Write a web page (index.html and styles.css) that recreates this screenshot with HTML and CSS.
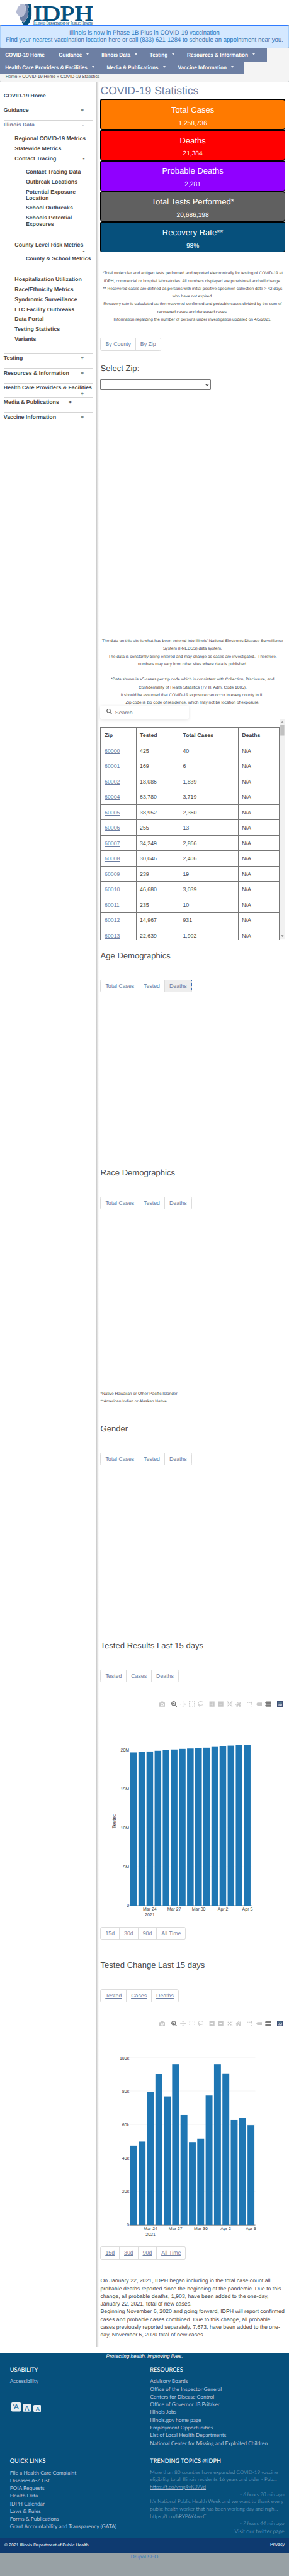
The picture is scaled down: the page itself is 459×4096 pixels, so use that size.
FILE: index.html
```html
<!DOCTYPE html>
<html lang="en">
<head>
<meta charset="utf-8">
<title>COVID-19 Statistics | IDPH</title>
<link rel="stylesheet" href="styles.css">
</head>
<body>
<svg class="sprite" width="0" height="0">
  <symbol id="i-camera" viewBox="0 0 16 16"><path fill-rule="evenodd" d="M1 4h3l1.500-3h5L12 4h3q1 0 1 1v9q0 1-1 1H1q-1 0-1-1V5q0-1 1-1zM8 5a4 4 0 1 0 .01 0zm0 1.700a2.300 2.300 0 1 1-.01 0z"/></symbol>
  <symbol id="i-zoom" viewBox="0 0 16 16"><path fill-rule="evenodd" d="M6.500 0a6.500 6.500 0 1 0 .01 0zM3 3.200h7v6.600H3zM4.300 4.500v4h4.400v-4z"/><path d="M5 5.200h3v2.600H5zM10 11.500l2-1.500 4 4.500-1.500 1.500z"/></symbol>
  <symbol id="i-pan" viewBox="0 0 16 16"><path d="M8 0l2.500 3H8.700v4.300H13V5.500L16 8l-3 2.500V8.700H8.700V13h1.800L8 16l-2.500-3h1.800V8.700H3v1.800L0 8l3-2.500v1.800h4.300V3H5.500z"/></symbol>
  <symbol id="i-select" viewBox="0 0 16 16"><path d="M0 0h2v2H0zM4.700 0h2v2h-2zM9.300 0h2v2h-2zM14 0h2v2h-2zM0 4.700h2v2H0zM14 4.700h2v2h-2zM0 9.300h2v2H0zM14 9.300h2v2h-2zM0 14h2v2H0zM4.700 14h2v2h-2zM9.300 14h2v2h-2zM14 14h2v2h-2z"/></symbol>
  <symbol id="i-lasso" viewBox="0 0 16 16"><g fill="none" stroke="currentColor" stroke-width="1.500"><ellipse cx="8.500" cy="6" rx="6.700" ry="5.200"/><circle cx="4" cy="10" r="2"/><path d="M4 12q2 2 .500 4"/></g></symbol>
  <symbol id="i-plus" viewBox="0 0 16 16"><path fill-rule="evenodd" d="M1 1h14v14H1zM7 4v3H4v2h3v3h2V9h3V7H9V4z"/></symbol>
  <symbol id="i-minus" viewBox="0 0 16 16"><path fill-rule="evenodd" d="M1 1h14v14H1zM4 7v2h8V7z"/></symbol>
  <symbol id="i-auto" viewBox="0 0 16 16"><path d="M0 0h4v1H1v3H0zM12 0h4v4h-1V1h-3zM0 12h1v3h3v1H0zM15 12h1v4h-4v-1h3zM3 3h4L5.700 4.300 8 6.800l2.300-2.500L9 3h4v4l-1.300-1.300L9.200 8l2.500 2.300L13 9v4H9l1.300-1.300L8 9.200l-2.300 2.500L7 13H3V9l1.300 1.300L6.800 8 4.300 5.700 3 7z"/></symbol>
  <symbol id="i-home" viewBox="0 0 16 16"><path d="M8 1.500l3.500 3.700V2.500h2v4.800L16 9.500l-1 1L8 3.700 1 10.500l-1-1zM8 5l5.500 5.300V15h-4v-4h-3v4h-4v-4.700z"/></symbol>
  <symbol id="i-spike" viewBox="0 0 16 16"><circle cx="10.500" cy="4" r="2.600"/><path d="M0 2.800h2.300v2H0zM4.500 2.800h2.300v2H4.500zM9.700 7.500h1.800v2.300H9.700zM9.700 12h1.800v2.300H9.700z"/></symbol>
  <symbol id="i-tag" viewBox="0 0 16 16"><path d="M0 8l3-4h12.500v8H3z"/></symbol>
  <symbol id="i-compare" viewBox="0 0 16 16"><path d="M0 4l2-3h14v6H2zM0 12l2-3h14v6H2z"/></symbol>
  <symbol id="i-plotly" viewBox="0 0 16 16"><path fill="#3f4f75" d="M0 0h16v16H0z"/><path fill="#fff" d="M3 9h1.300v4H3zM5.900 6.500h1.300V13H5.900zM8.800 9h1.300v4H8.800zM11.700 6.500H13V13h-1.300z"/><path fill="#80cfbe" d="M3 3h1.300v1.300H3zM5.900 3h1.300v1.300H5.900zM8.800 3h1.300v1.300H8.800zM11.700 3H13v1.300h-1.300zM3 6h1.300v1.300H3zM8.800 6h1.300v1.300H8.800z"/></symbol>
</svg>
<div class="page">
  <header class="brand">
    <svg class="logo" viewBox="42 10 212 58">
      <path fill="#06507c" d="M66 10h18c0 4 1 7 1 11v22c-2 4-1 8-3 12-2 1-3 3-2 5-2 4-5 6-7 8h-8c-4-3-7-6-6-10z"/>
      <path fill="#6e80a6" stroke="#fff" stroke-width=".8" d="M58 10h16c2 3 3 6 3 9-1 3-3 5-2 8 1 2 2 4 1 6-1 3-1 7 0 10-2 4-5 7-6 11-2 2-3 5-6 6-5-1-8-4-11-7-1-3 1-5-1-8z"/>
      <path fill="#b6bcd4" stroke="#fff" stroke-width=".8" d="M52 10h11c4 3 6 6 7 10-1 4-2 8-2 11 0 4-1 7-4 9-1 3-3 4-6 5-5 0-9-1-11-5-3-3-4-6-5-8 1-4 3-4 4-7-1-5 2-8 7-10 1-2 1-3-1-5z"/>
      <text class="logo-name" x="90" y="55.500" textLength="162" lengthAdjust="spacingAndGlyphs">IDPH</text>
      <text class="logo-sub" x="90" y="66.500" textLength="162" lengthAdjust="spacingAndGlyphs">I<tspan class="sc">LLINOIS</tspan> D<tspan class="sc">EPARTMENT OF</tspan> P<tspan class="sc">UBLIC</tspan> H<tspan class="sc">EALTH</tspan></text>
    </svg>
  </header>
  <div class="banner">Illinois is now in Phase 1B Plus in COVID-19 vaccination<br>Find your nearest vaccination location here or call (833) 621-1284 to schedule an appointment near you.</div>
  <div class="navwrap">
    <nav class="nav nav-a"><a class="plain">COVID-19 Home</a><a>Guidance</a><a>Illinois Data</a><a>Testing</a><a>Resources &amp; Information</a></nav>
    <nav class="nav nav-b"><a>Health Care Providers &amp; Facilities</a><a>Media &amp; Publications</a><a>Vaccine Information</a></nav>
    <div class="crumbs"><u>Home</u> » <u>COVID-19 Home</u> » COVID-19 Statistics</div>
  </div>
  <div class="cols">
    <aside class="side">
      <div class="top">COVID-19 Home</div>
      <div class="top">Guidance<i>+</i></div>
      <div class="top"><span class="on">Illinois Data</span><i>-</i></div>
      <ul class="sub">
        <li>Regional COVID-19 Metrics</li>
        <li>Statewide Metrics</li>
        <li>Contact Tracing<i>-</i></li>
      </ul>
      <ul class="sub sub2">
        <li>Contact Tracing Data</li>
        <li>Outbreak Locations</li>
        <li>Potential Exposure<br>Location</li>
        <li>School Outbreaks</li>
        <li>Schools Potential<br>Exposures</li>
      </ul>
      <ul class="sub county"><li>County Level Risk Metrics<br><i>-</i></li></ul>
      <ul class="sub sub3"><li>County &amp; School Metrics</li></ul>
      <ul class="sub sub4">
        <li>Hospitalization Utilization</li>
        <li>Race/Ethnicity Metrics</li>
        <li>Syndromic Surveillance</li>
        <li>LTC Facility Outbreaks</li>
        <li>Data Portal</li>
        <li>Testing Statistics</li>
        <li>Variants</li>
      </ul>
      <div class="top">Testing<i>+</i></div>
      <div class="top">Resources &amp; Information<i>+</i></div>
      <div class="top wrap">Health Care Providers &amp; Facilities<i>+</i></div>
      <div class="top near">Media &amp; Publications<i>+</i></div>
      <div class="top">Vaccine Information<i>+</i></div>
    </aside>
    <main class="main">
      <h1>COVID-19 Statistics</h1>
      <div class="cards">
        <div class="card c1"><b>Total Cases</b><span>1,258,736</span></div>
        <div class="card c2"><b>Deaths</b><span>21,384</span></div>
        <div class="card c3"><b>Probable Deaths</b><span>2,281</span></div>
        <div class="card c4"><b>Total Tests Performed*</b><span>20,686,198</span></div>
        <div class="card c5"><b>Recovery Rate**</b><span>98%</span></div>
      </div>
      <p class="notes n1">*Total molecular and antigen tests performed and reported electronically for testing of COVID-19 at<br>IDPH, commercial or hospital laboratories. All numbers displayed are provisional and will change.<br>** Recovered cases are defined as persons with initial positive specimen collection date &gt; 42 days<br>who have not expired.<br>Recovery rate is calculated as the recovered confirmed and probable cases divided by the sum of<br>recovered cases and deceased cases.<br>Information regarding the number of persons under investigation updated on 4/5/2021.</p>
      <div class="tabs t-geo"><a>By County</a><a>By Zip</a></div>
      <h2 class="h-zip">Select Zip:</h2>
      <div class="select"><svg viewBox="0 0 10 6"><path d="M1 1l4 4 4-4" fill="none" stroke="#4a4a4a" stroke-width="2"/></svg></div>
      <p class="notes n2">The data on this site is what has been entered into Illinois' National Electronic Disease Surveillance<br>System (I-NEDSS) data system.<br>The data is constantly being entered and may change as cases are investigated.&nbsp; Therefore,<br>numbers may vary from other sites where data is published.<br><br>*Data shown is &gt;5 cases per zip code which is consistent with Collection, Disclosure, and<br>Confidentiality of Health Statistics (77 Ill. Adm. Code 1005).<br>It should be assumed that COVID-19 exposure can occur in every county in IL.<br>Zip code is zip code of residence, which may not be location of exposure.</p>
      <div class="search"><svg viewBox="0 0 15 15"><circle cx="6" cy="5.500" r="4.700" fill="none" stroke="#4a4a4a" stroke-width="1.800"/><path d="M9.300 8.800l5 5.300" stroke="#4a4a4a" stroke-width="2.200"/></svg>Search</div>
      <div class="scroller">
        <div class="grid">
          <b>Zip</b><b>Tested</b><b>Total Cases</b><b>Deaths</b>
          <a>60000</a><span>425</span><span>40</span><span>N/A</span>
          <a>60001</a><span>169</span><span>6</span><span>N/A</span>
          <a>60002</a><span>18,086</span><span>1,839</span><span>N/A</span>
          <a>60004</a><span>63,780</span><span>3,719</span><span>N/A</span>
          <a>60005</a><span>38,952</span><span>2,360</span><span>N/A</span>
          <a>60006</a><span>255</span><span>13</span><span>N/A</span>
          <a>60007</a><span>34,249</span><span>2,866</span><span>N/A</span>
          <a>60008</a><span>30,046</span><span>2,406</span><span>N/A</span>
          <a>60009</a><span>239</span><span>19</span><span>N/A</span>
          <a>60010</a><span>46,680</span><span>3,039</span><span>N/A</span>
          <a>60011</a><span>235</span><span>10</span><span>N/A</span>
          <a>60012</a><span>14,967</span><span>931</span><span>N/A</span>
          <a>60013</a><span>22,639</span><span>1,902</span><span>N/A</span>
        </div>
        <svg class="bar" viewBox="0 0 15 600"><path fill="#f1f1f1" d="M0 0h15v600H0z"/><path fill="#c1c1c1" d="M2 15h11v30H2z"/><path fill="#a3a3a3" d="M7.500 6l3.500 4H4z"/><path fill="#505050" d="M7.500 594l3.500-4H4z"/></svg>
      </div>
      <h2 class="h-age">Age Demographics</h2>
      <div class="tabs t-sec"><a>Total Cases</a><a>Tested</a><a class="focus">Deaths</a></div>
      <h2 class="h-race">Race Demographics</h2>
      <div class="tabs t-sec"><a>Total Cases</a><a>Tested</a><a>Deaths</a></div>
      <p class="notes n3">*Native Hawaiian or Other Pacific Islander<br>**American Indian or Alaskan Native</p>
      <h2 class="h-gender">Gender</h2>
      <div class="tabs t-sec"><a>Total Cases</a><a>Tested</a><a>Deaths</a></div>
      <h2 class="h-tested">Tested Results Last 15 days</h2>
      <div class="tabs t-sec"><a>Tested</a><a>Cases</a><a>Deaths</a></div>
      <div class="modebar">
        <div><svg><use href="#i-camera"/></svg></div>
        <div><svg class="act"><use href="#i-zoom"/></svg><svg><use href="#i-pan"/></svg><svg><use href="#i-select"/></svg><svg><use href="#i-lasso"/></svg></div>
        <div><svg><use href="#i-plus"/></svg><svg><use href="#i-minus"/></svg><svg><use href="#i-auto"/></svg><svg><use href="#i-home"/></svg></div>
        <div><svg><use href="#i-spike"/></svg><svg><use href="#i-tag"/></svg><svg class="act"><use href="#i-compare"/></svg></div>
        <div><svg><use href="#i-plotly"/></svg></div>
      </div>
      <svg class="plot" viewBox="273 4646 501 599">
        <path class="gl" d="M353 4763.500h332M353 4869.500h332M353 4975.300h332M353 5081.200h332"/>
        <path class="zero" d="M353 5187h332"/>
        <g class="bars">
          <rect x="355" y="4770" width="18" height="417"/><rect x="377.100" y="4769" width="18" height="418"/><rect x="399.100" y="4767.400" width="18" height="419.600"/><rect x="421.200" y="4765.500" width="18" height="421.500"/><rect x="443.200" y="4764" width="18" height="423"/><rect x="465.300" y="4762" width="18" height="425"/><rect x="487.400" y="4760.400" width="18" height="426.600"/><rect x="509.400" y="4759.400" width="18" height="427.600"/><rect x="531.500" y="4758" width="18" height="429"/><rect x="553.500" y="4757" width="18" height="430"/><rect x="575.600" y="4755" width="18" height="432"/><rect x="597.700" y="4753" width="18" height="434"/><rect x="619.700" y="4751.400" width="18" height="435.600"/><rect x="641.800" y="4750" width="18" height="437"/><rect x="664" y="4749" width="18" height="438"/>
        </g>
        <g class="ylab"><text x="352" y="4768">20M</text><text x="352" y="4874">15M</text><text x="352" y="4979.500">10M</text><text x="352" y="5085.500">5M</text><text x="352" y="5191">0</text></g>
        <g class="xlab"><text x="408" y="5200">Mar 24</text><text x="408" y="5216">2021</text><text x="474.500" y="5200">Mar 27</text><text x="541" y="5200">Mar 30</text><text x="607" y="5200">Apr 2</text><text x="673.500" y="5200">Apr 5</text></g>
        <text class="ytitle" transform="translate(315 4956.500) rotate(-90)">Tested</text>
      </svg>
      <div class="tabs"><a>15d</a><a>30d</a><a>90d</a><a>All Time</a></div>
      <h2 class="h-change">Tested Change Last 15 days</h2>
      <div class="tabs t-sec"><a>Tested</a><a>Cases</a><a>Deaths</a></div>
      <div class="modebar">
        <div><svg><use href="#i-camera"/></svg></div>
        <div><svg class="act"><use href="#i-zoom"/></svg><svg><use href="#i-pan"/></svg><svg><use href="#i-select"/></svg><svg><use href="#i-lasso"/></svg></div>
        <div><svg><use href="#i-plus"/></svg><svg><use href="#i-minus"/></svg><svg><use href="#i-auto"/></svg><svg><use href="#i-home"/></svg></div>
        <div><svg><use href="#i-spike"/></svg><svg><use href="#i-tag"/></svg><svg class="act"><use href="#i-compare"/></svg></div>
        <div><svg><use href="#i-plotly"/></svg></div>
      </div>
      <svg class="plot" viewBox="273 5516 501 599">
        <path class="gl" d="M353 5601.300h342M353 5692.400h342M353 5783.500h342M353 5874.700h342M353 5965.800h342"/>
        <path class="zero" d="M353 6057h342"/>
        <g class="bars">
          <rect x="355" y="5841" width="18.700" height="216"/><rect x="377.800" y="5830" width="18.700" height="227"/><rect x="400.500" y="5695" width="18.700" height="362"/><rect x="423.300" y="5646" width="18.700" height="411"/><rect x="446" y="5707" width="18.700" height="350"/><rect x="468.800" y="5619" width="18.700" height="438"/><rect x="491.600" y="5757.300" width="18.700" height="299.700"/><rect x="514.400" y="5831.300" width="18.700" height="225.700"/><rect x="537.100" y="5822" width="18.700" height="235"/><rect x="559.900" y="5703" width="18.700" height="354"/><rect x="582.700" y="5619" width="18.700" height="438"/><rect x="605.500" y="5644" width="18.700" height="413"/><rect x="628.200" y="5771" width="18.700" height="286"/><rect x="651" y="5765" width="18.700" height="292"/><rect x="673.800" y="5785" width="18.700" height="272"/>
        </g>
        <g class="ylab"><text x="352" y="5606">100k</text><text x="352" y="5697">80k</text><text x="352" y="5788">60k</text><text x="352" y="5879">40k</text><text x="352" y="5970">20k</text><text x="352" y="6061">0</text></g>
        <g class="xlab"><text x="410" y="6070">Mar 24</text><text x="410" y="6086">2021</text><text x="478" y="6070">Mar 27</text><text x="546.700" y="6070">Mar 30</text><text x="614.700" y="6070">Apr 2</text><text x="683" y="6070">Apr 5</text></g>
      </svg>
      <div class="tabs"><a>15d</a><a>30d</a><a>90d</a><a>All Time</a></div>
      <p class="para">On January 22, 2021, IDPH began including in the total case count all<br>probable deaths reported since the beginning of the pandemic. Due to this<br>change, all probable deaths, 1,903, have been added to the one-day,<br>January 22, 2021, total of new cases.<br>Beginning November 6, 2020 and going forward, IDPH will report confirmed<br>cases and probable cases combined. Due to this change, all probable<br>cases previously reported separately, 7,673, have been added to the one-<br>day, November 6, 2020 total of new cases</p>
    </main>
  </div>
  <footer class="foot">
    <div class="tagline">Protecting health, improving lives.</div>
    <div class="fgrid">
      <section>
        <h3>USABILITY</h3>
        <a>Accessibility</a>
        <div class="sizes">
          <svg width="27" height="26" viewBox="0 0 27 26"><rect width="26" height="25" rx="3" fill="#e9eef1"/><text x="13.500" y="19.500" font-size="20">A</text><path d="M4 7h5M6.500 4.500v5" stroke="#06507c"/></svg>
          <svg width="23" height="23" viewBox="0 0 23 23"><rect width="23" height="22" rx="3" fill="#e9eef1"/><text x="11.500" y="18" font-size="18">A</text></svg>
          <svg width="21" height="20" viewBox="0 0 21 20"><rect width="21" height="19" rx="3" fill="#e9eef1"/><text x="11.500" y="15.500" font-size="14.500">A</text><path d="M3 6h4" stroke="#06507c"/></svg>
        </div>
      </section>
      <section>
        <h3>RESOURCES</h3>
        <a>Advisory Boards</a><a>Office of the Inspector General</a><a>Centers for Disease Control</a><a>Office of Governor JB Pritzker</a><a>Illinois Jobs</a><a>Illinois.gov home page</a><a>Employment Opportunities</a><a>List of Local Health Departments</a><a>National Center for Missing and Exploited Children</a>
      </section>
      <section>
        <h3>QUICK LINKS</h3>
        <a>File a Health Care Complaint</a><a>Diseases A-Z List</a><a>FOIA Requests</a><a>Health Data</a><a>IDPH Calendar</a><a>Laws &amp; Rules</a><a>Forms &amp; Publications</a><a>Grant Accountability and Transparency (GATA)</a>
      </section>
      <section class="tweets">
        <h3>TRENDING TOPICS @IDPH</h3>
        <p>More than 80 counties have expanded COVID-19 vaccine<br>eligibility to all Illinois residents 16 years and older - Pub…<br><u>https://t.co/ymg4yK39Vd</u></p>
        <p class="r">- <em>6 hours 20 min</em> ago</p>
        <p>It's National Public Health Week and we want to thank every<br>public health worker that has been working day and nigh…<br><u>https://t.co/bRYPAY4wzC</u></p>
        <p class="r">- <em>7 hours 44 min</em> ago</p>
        <p class="r v">Visit our twitter page</p>
      </section>
    </div>
  </footer>
  <div class="legal"><span>© 2021 Illinois Department of Public Health.</span><span class="priv">Privacy</span></div>
  <div class="seo">Drupal SEO</div>
</div>
</body>
</html>
```

FILE: styles.css
```css
* { box-sizing: border-box; }
html, body { margin: 0; padding: 0; background: #98a1a5; }
body { overflow: hidden; font-family: "Liberation Sans", Arial, sans-serif; text-rendering: geometricPrecision; }
.sprite { display: block; position: absolute; }
p, h1, h2, h3, ul { margin: 0; padding: 0; list-style: none; }
h1, h2, h3 { font-weight: normal; }
.page { zoom: .58422; width: 785.6px; height: 7011px; background: #98a1a5; color: #4a4a4a; font-size: 15px; white-space: nowrap; overflow: hidden; }

.brand { height: 68px; background: #fff; padding: 10px 0 0 42px; }
.logo { display: block; width: 212px; height: 58px; overflow: visible; }
.logo-name { font: 59px "Liberation Serif", serif; fill: #06507c; stroke: #06507c; stroke-width: 1.6; }
.logo-sub { font: 12px "Liberation Serif", serif; fill: #06507c; stroke: #06507c; stroke-width: .2; }
.sc { font-size: 9.500px; }
.banner { height: 64px; background: #d4e8ff; border: 1px solid #a9d0fb; border-top: 3px solid #2f7bff; border-radius: 5px; padding-top: 10px; text-align: center; font-size: 16.350px; line-height: 20px; color: #3579b8; }

.navwrap { height: 92px; background: #f4f4f4; border-radius: 0 0 5px 5px; }
.nav { display: flex; height: 35px; background: #6d7fa3; color: #fff; font-weight: bold; font-size: 14px; line-height: 36px; }
.nav-a { width: 725px; }
.nav-b { width: 664px; }
.nav a { display: flex; align-items: center; padding: 0 20px 0 14px; }
.nav a.plain { padding-right: 24.500px; }
.nav a:not(.plain)::after { content: ""; margin: -3px 0 0 12px; border: 5px solid transparent; border-top: 6px solid #e8ebf2; border-bottom: 0; }
.crumbs { padding: 0 0 0 15px; font-size: 12px; line-height: 16px; }

.cols { display: flex; height: 6179px; background: #fff; padding-bottom: 15px; }
.side { width: 262px; padding: 23px 10px 0; font-weight: bold; font-size: 15px; line-height: 17px; }
.side i { font-style: normal; }
.top { height: 40px; border-top: 1px solid #d5d5d5; padding: 4px 24px 0 0; display: flex; justify-content: space-between; }
.top .on { color: #6d7fa3; }
.top.wrap { flex-wrap: wrap; padding-right: 0; }
.top.wrap i { margin-left: auto; margin-right: 24px; }
.top.near { padding-right: 57px; }
.sub { padding-left: 30px; margin-top: 3px; }
.sub li { margin-bottom: 10px; }
.sub i { float: right; margin-right: 22px; }
.sub2 { padding-left: 60px; margin-top: 20px; }
.county { margin-top: 40px; height: 34px; }
.sub3 { padding-left: 60px; }
.sub4 { margin-top: 40px; height: 208px; }

.main { flex: 1; padding: 5px 0 0 11px; background: linear-gradient(90deg, #c4c4c4, #e6e6e6 3px, #fff 7px); }
h1 { color: #6d7fa3; font-size: 30px; line-height: 36px; }
h2 { height: 24px; font-size: 22.400px; line-height: 24px; }
.cards { margin-top: 4px; width: 502px; height: 418px; display: grid; grid-template-rows: repeat(5, 83.600px); }
.card { border: 1px solid #000; border-top-width: 4px; border-radius: 6px; color: #fff; text-align: center; display: flex; flex-direction: column; padding-top: 13px; }
.card b { font-weight: normal; font-size: 22.400px; line-height: 28px; }
.card span { font-size: 17.500px; line-height: 20px; margin-top: 13px; }
.c1 { background: #ff7a00; } .c2 { background: #f00; } .c3 { background: #9000ff; } .c4 { background: #606060; } .c5 { background: #06507c; }
.notes { width: 501px; font-size: 11.250px; line-height: 21px; text-align: center; }
.n1 { margin-top: 48px; }
.n2 { margin-top: 674px; }
.n3 { margin-top: 492.500px; text-align: left; }
.tabs { display: flex; width: max-content; height: 35px; border: 1px solid #ddd; border-radius: 4px; background: #fff; line-height: 34px; color: #6d7fa3; text-decoration: underline; }
.tabs a { padding: 0 12px; border-left: 1px solid #ddd; text-decoration: underline; }
.tabs a:first-child { border-left: 0; }
.tabs a.focus { background: #eee; outline: 1px dotted #3b6db5; outline-offset: -1px; }
.t-geo { margin-top: 38px; }
.t-sec { margin-top: 53px; }
.h-zip { margin-top: 36px; }
.select { width: 300px; height: 29px; margin-top: 18px; border: 1px solid #767676; border-radius: 2px; background: #fff; display: flex; justify-content: flex-end; align-items: center; padding-right: 3px; }
.select svg { width: 10px; height: 6px; }
.search { width: 240px; height: 36px; margin-top: -4px; border-radius: 4px; background: #fff; box-shadow: 0 2px 10px rgba(0, 0, 0, .1); display: flex; align-items: center; padding-left: 17px; color: #757575; }
.search svg { width: 15px; height: 15px; margin: -4px 8px 0 0; }
.scroller { position: relative; width: 502px; height: 600px; display: flex; overflow: hidden; }
.grid { width: 487px; height: 589px; margin-top: 22px; display: grid; grid-template-columns: 96px 117px 160.500px 112.500px; grid-auto-rows: 42px; border-top: 1px solid #777; border-left: 1px solid #777; }
.grid > * { border-right: 1px solid #777; border-bottom: 1px solid #777; padding-left: 9.500px; line-height: 43px; background: #fff; }
.grid b { border-bottom-color: #4a4a4a; }
.grid a { color: #6d7fa3; text-decoration: underline; }
.bar { width: 15px; height: 600px; }
.h-age { margin-top: 33px; }
.h-race { margin-top: 478px; }
.h-gender { margin-top: 51px; }
.h-tested { margin-top: 478.500px; }
.h-change { margin-top: 58px; }
.modebar { display: flex; gap: 16px; height: 16px; margin: 50px 0 0 160px; }
.modebar div { display: flex; gap: 8px; }
.modebar svg { width: 16px; height: 16px; fill: #c8c8c8; color: #c8c8c8; }
.modebar .act { fill: #7b7b7b; }
.plot { display: block; width: 501px; height: 599px; font-size: 12px; }
.plot text { fill: #444; }
.gl { stroke: #eee; fill: none; }
.zero { stroke: #888; stroke-width: 2; }
.bars { fill: #1f77b4; }
.ylab { text-anchor: end; }
.xlab, .ytitle { text-anchor: middle; }
.ytitle { font-size: 14px; }
.para { margin-top: 47.500px; line-height: 21px; }

.foot { height: 506px; background: #06507c; color: #b9c3dc; font-family: Lato, sans-serif; font-size: 14.400px; line-height: 21px; }
.tagline { height: 36.500px; text-align: center; font: italic 14px/21px "Liberation Sans", Arial, sans-serif; color: #fff; }
.fgrid { display: grid; grid-template-columns: 381px 365px; grid-template-rows: 248.500px 220px; padding-left: 27px; }
.fgrid a { display: block; }
h3 { color: #fff; font-size: 15.750px; line-height: 20px; height: 31.500px; }
.sizes { display: flex; align-items: flex-end; gap: 5px; margin: 47px 0 0 4px; height: 26px; }
.sizes svg:first-child { margin-right: -1px; }
.sizes text { text-anchor: middle; fill: #1d74a8; font-family: "Liberation Sans", sans-serif; stroke: #1d74a8; stroke-width: .4; }
.tweets { font-weight: 300; font-size: 13.950px; line-height: 20px; color: #8fb3cf; }
.tweets h3 { font-weight: 400; }
.tweets u { color: #b9c3dc; }
.r { text-align: right; }
.v { font-size: 15px; line-height: 21px; }
.legal { height: 40px; background: #0e3a70; color: #fff; font-size: 12px; line-height: 40px; display: flex; justify-content: space-between; padding: 0 12px; }
.priv { line-height: 38px; }
.seo { text-align: center; font-size: 14px; line-height: 20px; color: #3b7dbd; }
```
